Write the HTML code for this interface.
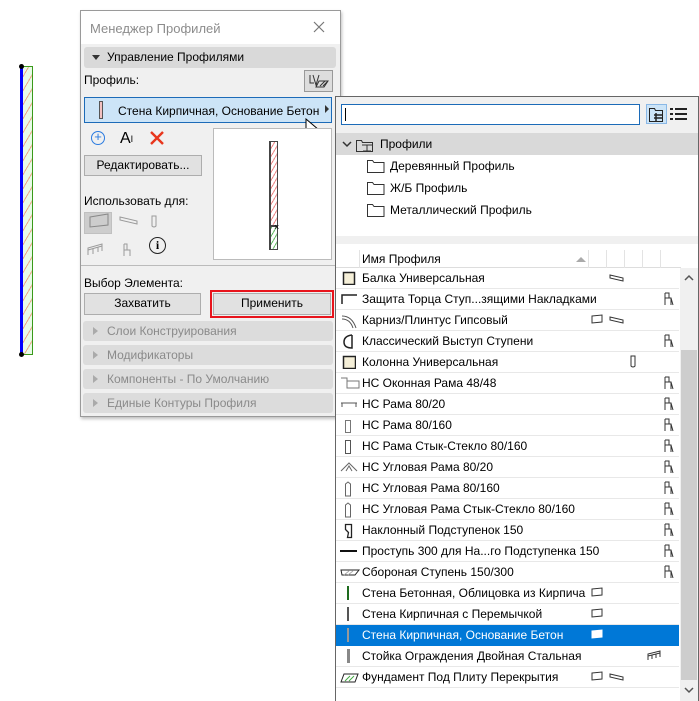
<!DOCTYPE html>
<html><head><meta charset="utf-8"><style>
*{box-sizing:border-box;margin:0;padding:0}
body{width:699px;height:701px;background:#fff;position:relative;overflow:hidden;font-family:"Liberation Sans","DejaVu Sans",sans-serif;font-size:12px;color:#000}
.a{position:absolute}
.t{position:absolute;white-space:nowrap;line-height:14px}
.btn{position:absolute;background:#e1e1e1;border:1px solid #adadad;text-align:center;line-height:19px}
.sec{position:absolute;left:83px;width:250px;height:20px;background:#dcdcdc;border-radius:3px;color:#8a8a8a;line-height:20px;padding-left:24px}
.sec:before{content:"";position:absolute;left:10px;top:6px;border-left:5px solid #aaa;border-top:4px solid transparent;border-bottom:4px solid transparent}
.row{position:absolute;left:336px;width:343px;height:21px;border-bottom:1px solid #e8e8e8;line-height:20px}
.row span{position:absolute;left:26px}
.ic{position:absolute;top:3px}
</style></head><body>

<div class="a" style="left:22px;top:66px;width:11px;height:289px;background:#e8fbe8;border:1px solid #3a9a1a;border-left:none;background-image:repeating-linear-gradient(-60deg,transparent 0 6px,#e9a98a 6px 7px)"></div>
<div class="a" style="left:20px;top:66px;width:3px;height:289px;background:#0000ff"></div>
<div class="a" style="left:19px;top:64px;width:5px;height:5px;background:#000;border-radius:50%"></div>
<div class="a" style="left:19px;top:352px;width:5px;height:5px;background:#000;border-radius:50%"></div>

<div class="a" style="left:80px;top:10px;width:261px;height:407px;background:#f0f0f0;border:1px solid #9a9a9a;box-shadow:1px 2px 3px rgba(0,0,0,.25)"></div>
<div class="a" style="left:81px;top:11px;width:259px;height:33px;background:#fff"></div>
<div class="t" style="left:90px;top:22px;color:#8c8c8c;font-size:13px">Менеджер Профилей</div>
<svg class="a" style="left:313px;top:21px" width="12" height="12" stroke="#777" stroke-width="1.2"><path d="M1 1l10 10M11 1L1 11"/></svg>
<div class="a" style="left:84px;top:47px;width:252px;height:21px;background:#d9d9d9;border-radius:3px"></div>
<div class="a" style="left:92px;top:55px;border-top:5px solid #333;border-left:4px solid transparent;border-right:4px solid transparent"></div>
<div class="t" style="left:107px;top:50px">Управление Профилями</div>
<div class="t" style="left:84px;top:73px">Профиль:</div>
<div class="a" style="left:304px;top:70px;width:29px;height:22px;background:#ddd;border:1px solid #999"></div>
<svg class="a" style="left:308px;top:73px" width="22" height="17"><path d="M2 2v8h4M5 2l3 10 3-10M11 8h9l-4 6H8z" stroke="#333" fill="none"/><path d="M12 13l5-5M15 13l4-4" stroke="#333"/></svg>
<div class="a" style="left:84px;top:97px;width:248px;height:26px;background:#cce4f7;border:1px solid #1c6bb8"></div>
<div class="a" style="left:99px;top:101px;width:4px;height:18px;border:1px solid #555;background:#f3c0c0"></div>
<div class="t" style="left:118px;top:104px">Стена Кирпичная, Основание Бетон</div>
<div class="a" style="left:325px;top:105px;border-left:4px solid #333;border-top:4px solid transparent;border-bottom:4px solid transparent"></div>
<svg class="a" style="left:305px;top:118px" width="16" height="22"><path d="M1 1v16l4-4 3 7 3-1-3-7h6z" fill="#fff" stroke="#000"/></svg>
<div class="a" style="left:91px;top:131px;width:14px;height:14px;border:1.5px solid #2a7be0;border-radius:50%;color:#2a7be0;font-size:13px;line-height:10px;text-align:center">+</div>
<div class="t" style="left:120px;top:131px;font-size:16px;line-height:16px">A<span style="font-size:9px;vertical-align:top">I</span></div>
<svg class="a" style="left:150px;top:131px" width="14" height="14" stroke="#e8361d" stroke-width="2.4"><path d="M1 1l12 12M13 1L1 13"/></svg>
<div class="btn" style="left:84px;top:155px;width:118px;height:21px">Редактировать...</div>
<div class="a" style="left:213px;top:128px;width:119px;height:132px;background:#fff;border:1px solid #bbb"></div>
<div class="a" style="left:269px;top:141px;width:9px;height:85px;border:1px solid #444;border-left-width:2px;background:repeating-linear-gradient(-60deg,#fff 0 3px,#e88 3px 4px)"></div>
<div class="a" style="left:269px;top:226px;width:9px;height:24px;border:1px solid #444;border-left-width:2px;background:repeating-linear-gradient(-60deg,#fff 0 3px,#6b6 3px 4px)"></div>
<div class="t" style="left:274px;top:220px;font-size:9px">×</div>
<div class="t" style="left:84px;top:194px">Использовать для:</div>
<div class="a" style="left:84px;top:212px;width:28px;height:22px;background:#cdcdcd;border:1px solid #c0c0c0"></div>
<svg class="a" style="left:84px;top:210px" width="90" height="50" fill="none" stroke="#9a9a9a"><path d="M6 7l18-3v11l-18 2z" stroke="#888"/><path d="M36 7l17 4v3l-17-4zM36 7v3M53 11v3"/><path d="M68 6h4v10q-2 2-4 0z"/><path d="M4 45v-7l14-4v7M4 40l14-4M9 39v5M14 37v5"/><path d="M40 34v12M40 40h6v6M40 34h3v6"/></svg>
<div class="a" style="left:149px;top:237px;width:17px;height:17px;border:1.5px solid #222;border-radius:50%;text-align:center;font-weight:bold;font-family:'Liberation Serif',serif;line-height:14px">i</div>
<div class="a" style="left:81px;top:265px;width:259px;height:1px;background:#bbb"></div>
<div class="t" style="left:84px;top:276px">Выбор Элемента:</div>
<div class="btn" style="left:84px;top:293px;width:117px;height:22px">Захватить</div>
<div class="a" style="left:210px;top:290px;width:124px;height:28px;border:2px solid #e8141c"></div>
<div class="btn" style="left:213px;top:293px;width:118px;height:22px">Применить</div>
<div class="sec" style="top:321px">Слои Конструирования</div>
<div class="sec" style="top:345px">Модификаторы</div>
<div class="sec" style="top:369px">Компоненты - По Умолчанию</div>
<div class="sec" style="top:393px">Единые Контуры Профиля</div>

<div class="a" style="left:335px;top:96px;width:364px;height:605px;background:#fff;border:1px solid #666;border-bottom:none"></div>
<div class="a" style="left:336px;top:97px;width:362px;height:36px;background:#f0f0f0"></div>
<div class="a" style="left:341px;top:104px;width:299px;height:21px;background:#fff;border:1px solid #1c6bb8"></div>
<div class="a" style="left:345px;top:108px;width:1px;height:13px;background:#000"></div>
<div class="a" style="left:646px;top:104px;width:21px;height:20px;background:#cce4f7;border:1px solid #8ab8e6"></div>
<svg class="a" style="left:648px;top:106px" width="18" height="17" fill="none" stroke="#222"><path d="M1.5 2.5h5l1 2h7v11h-13z"/><path d="M6 9h9M6 12h9M8 7v8" stroke-width="1.5"/></svg>
<svg class="a" style="left:670px;top:107px" width="18" height="14" fill="#222"><rect x="0" y="1" width="3" height="2"/><rect x="5" y="1" width="12" height="2"/><rect x="0" y="6" width="3" height="2"/><rect x="5" y="6" width="12" height="2"/><rect x="0" y="11" width="3" height="2"/><rect x="5" y="11" width="12" height="2"/></svg>
<div class="a" style="left:336px;top:133px;width:362px;height:22px;background:#d9d9d9"></div>
<svg class="a" style="left:342px;top:137px" width="40" height="16" fill="none" stroke="#333"><path d="M1 5l4 4 4-4" stroke-width="1.5"/><path d="M14.5 3.5h5l1 2h10v9h-16z"/><path d="M20 8h10M25 8v6M21 14h8"/></svg>
<div class="t" style="left:380px;top:137px">Профили</div>
<svg class="a" style="left:367px;top:158px" width="18" height="60" fill="none" stroke="#333"><path d="M0.5 2.5h5l1.5 2h10v10h-16.5z"/><path d="M0.5 24.5h5l1.5 2h10v10h-16.5z"/><path d="M0.5 46.5h5l1.5 2h10v10h-16.5z"/></svg>
<div class="t" style="left:390px;top:159px">Деревянный Профиль</div>
<div class="t" style="left:390px;top:181px">Ж/Б Профиль</div>
<div class="t" style="left:390px;top:203px">Металлический Профиль</div>
<div class="a" style="left:336px;top:236px;width:362px;height:8px;background:#f0f0f0"></div>
<div class="a" style="left:336px;top:250px;width:345px;height:18px;border-bottom:1px solid #ddd"></div>
<div class="a" style="left:359px;top:250px;width:1px;height:18px;background:#e3e3e3"></div>
<div class="a" style="left:588px;top:250px;width:1px;height:18px;background:#e3e3e3"></div>
<div class="a" style="left:606px;top:250px;width:1px;height:18px;background:#e3e3e3"></div>
<div class="a" style="left:624px;top:250px;width:1px;height:18px;background:#e3e3e3"></div>
<div class="a" style="left:642px;top:250px;width:1px;height:18px;background:#e3e3e3"></div>
<div class="a" style="left:660px;top:250px;width:1px;height:18px;background:#e3e3e3"></div>
<div class="t" style="left:362px;top:252px">Имя Профиля</div>
<div class="a" style="left:576px;top:257px;border-bottom:5px solid #aaa;border-left:5px solid transparent;border-right:5px solid transparent"></div>
<div class="a" style="left:680px;top:268px;width:18px;height:433px;background:#f0f0f0"></div>
<div class="a" style="left:681px;top:350px;width:16px;height:330px;background:#cdcdcd"></div>
<svg class="a" style="left:683px;top:274px" width="12" height="8" fill="none" stroke="#555" stroke-width="1.5"><path d="M2 6l4-4 4 4"/></svg>
<svg class="a" style="left:683px;top:686px" width="12" height="8" fill="none" stroke="#555" stroke-width="1.5"><path d="M2 2l4 4 4-4"/></svg>

<div class="row" style="top:268px"><svg class="ic" style="left:6px" width="14" height="14"><rect x="1.5" y="1.5" width="11" height="12" fill="#f5efd8" stroke="#222" stroke-width="1.5"/></svg><span>Балка Универсальная</span></div>
<div class="row" style="top:289px"><svg class="ic" style="left:4px" width="20" height="14" fill="none" stroke="#222"><path d="M2 12V3h15" stroke-width="1.5"/></svg><span>Защита Торца Ступ...зящими Накладками</span></div>
<div class="row" style="top:310px"><svg class="ic" style="left:4px" width="20" height="16" fill="none" stroke="#555"><path d="M2 3q10 0 14 12M2 6q8 0 11 9"/></svg><span>Карниз/Плинтус Гипсовый</span></div>
<div class="row" style="top:331px"><svg class="ic" style="left:6px" width="14" height="15" fill="none" stroke="#222"><path d="M10 1v13q-8 0-8-6t8-7" stroke-width="1.5"/></svg><span>Классический Выступ Ступени</span></div>
<div class="row" style="top:352px"><svg class="ic" style="left:6px" width="14" height="14"><rect x="1.5" y="1.5" width="12" height="12" fill="#f5efd8" stroke="#222" stroke-width="1.5"/></svg><span>Колонна Универсальная</span></div>
<div class="row" style="top:373px"><svg class="ic" style="left:4px" width="20" height="14" fill="none" stroke="#777"><path d="M1 2h6v6M7 5h12v7H7z"/></svg><span>НС Оконная Рама 48/48</span></div>
<div class="row" style="top:394px"><svg class="ic" style="left:4px" width="20" height="14" fill="none" stroke="#555"><path d="M1 6h16M2 6v4M16 6v4"/></svg><span>НС Рама 80/20</span></div>
<div class="row" style="top:415px"><svg class="ic" style="left:8px" width="10" height="16" fill="none" stroke="#777"><path d="M1.5 2.5h5v12h-5z"/></svg><span>НС Рама 80/160</span></div>
<div class="row" style="top:436px"><svg class="ic" style="left:8px" width="10" height="16" fill="none" stroke="#555"><path d="M1.5 1.5h5v13h-5z"/></svg><span>НС Рама Стык-Стекло 80/160</span></div>
<div class="row" style="top:457px"><svg class="ic" style="left:4px" width="20" height="14" fill="none" stroke="#666"><path d="M1 11l8-8 8 8M6 11l3-5 3 5"/></svg><span>НС Угловая Рама 80/20</span></div>
<div class="row" style="top:478px"><svg class="ic" style="left:8px" width="10" height="16" fill="none" stroke="#666"><path d="M1.5 3l2.5-2 2.5 2v12h-5z"/></svg><span>НС Угловая Рама 80/160</span></div>
<div class="row" style="top:499px"><svg class="ic" style="left:8px" width="10" height="16" fill="none" stroke="#666"><path d="M1.5 3l2.5-2 2.5 2v12h-5z"/></svg><span>НС Угловая Рама Стык-Стекло 80/160</span></div>
<div class="row" style="top:520px"><svg class="ic" style="left:8px" width="10" height="16" fill="none" stroke="#222"><path d="M1.5 1.5h6v13h-4l1-5-3-3z" stroke-width="1.3"/></svg><span>Наклонный Подступенок 150</span></div>
<div class="row" style="top:541px"><div class="a" style="left:4px;top:9px;width:17px;height:2px;background:#111"></div><span>Проступь 300 для На...го Подступенка 150</span></div>
<div class="row" style="top:562px"><svg class="ic" style="left:4px" width="20" height="14" fill="none" stroke="#222"><path d="M1 5h18l-4 5H2z"/><path d="M4 10l5-4M8 10l5-4" stroke="#aaa"/></svg><span>Сбороная Ступень 150/300</span></div>
<div class="row" style="top:583px"><div class="a" style="left:11px;top:3px;width:2px;height:14px;background:#1e6b1e"></div><span>Стена Бетонная, Облицовка из Кирпича</span></div>
<div class="row" style="top:604px"><div class="a" style="left:11px;top:3px;width:2px;height:14px;background:#555"></div><span>Стена Кирпичная с Перемычкой</span></div>
<div class="row" style="top:625px;background:#0078d7;color:#fff;border-bottom-color:#0078d7"><div class="a" style="left:11px;top:3px;width:2px;height:14px;background:#999"></div><span>Стена Кирпичная, Основание Бетон</span></div>
<div class="row" style="top:646px"><div class="a" style="left:11px;top:3px;width:3px;height:14px;background:#888"></div><span>Стойка Ограждения Двойная Стальная</span></div>
<div class="row" style="top:667px"><svg class="ic" style="left:4px" width="20" height="14" fill="none" stroke="#222"><path d="M1 12l3-8h14l-3 8z"/><path d="M5 11l5-5M9 11l5-5" stroke="#4a4"/></svg><span>Фундамент Под Плиту Перекрытия</span></div>

<svg class="a" style="left:580px;top:268px" width="100" height="420" fill="none" stroke="#333">
<path d="M30 7l13 3v3l-13-3z"/>
<path d="M12 48l10-1v7l-10 1zM30 49l13 3v3l-13-3z"/>
<path d="M51 88h4v10q-2 2-4 0z"/>
<path d="M12 321l10-1v7l-10 1z"/>
<path d="M12 342l10-1v7l-10 1z"/>
<path d="M12 363l10-1v7l-10 1z" stroke="#fff" fill="#fff"/>
<path d="M68 392v-6l12-3v6M68 388l12-3M72 387v4M76 386v4"/>
<path d="M12 405l10-1v7l-10 1zM30 406l13 3v3l-13-3z"/>
</svg>
<svg class="a" style="left:662px;top:268px" width="14" height="310" fill="none" stroke="#333">
<g id="ch"><path d="M3 25v12M3 30h6v7M3 25h4v5M9 30l2 7"/></g>
<use href="#ch" y="42"/><use href="#ch" y="84"/><use href="#ch" y="105"/><use href="#ch" y="126"/><use href="#ch" y="147"/><use href="#ch" y="168"/><use href="#ch" y="189"/><use href="#ch" y="210"/><use href="#ch" y="231"/><use href="#ch" y="252"/><use href="#ch" y="273"/>
</svg>
</body></html>
